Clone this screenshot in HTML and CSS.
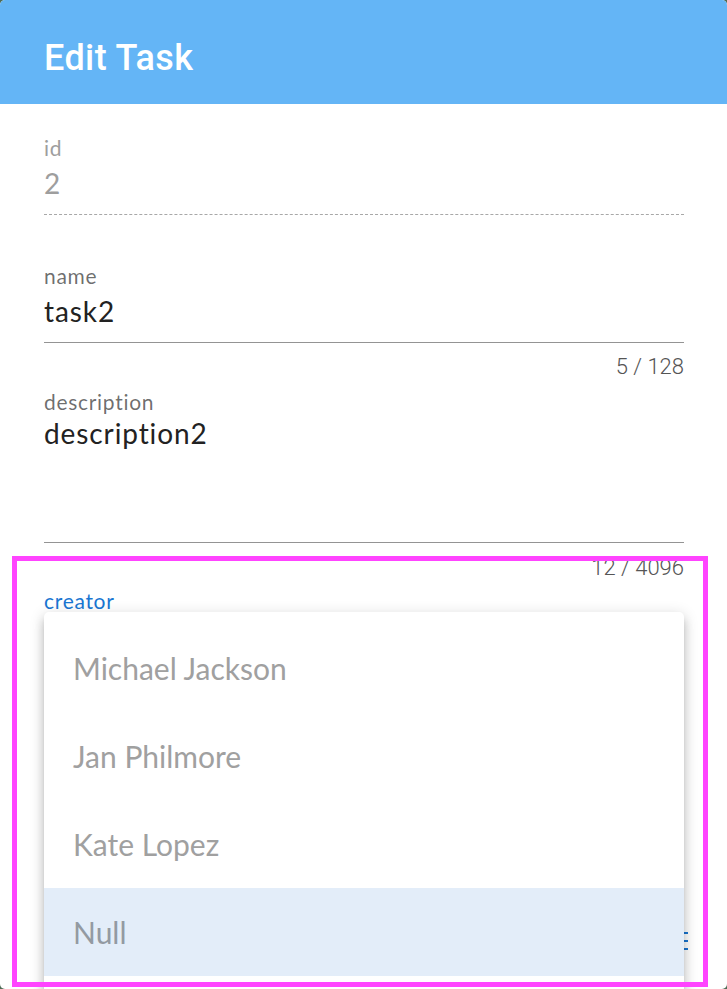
FILE: index.html
```html
<!DOCTYPE html>
<html lang="en">
<head>
<meta charset="utf-8">
<title>Edit Task</title>
<link rel="stylesheet" href="styles.css">
</head>
<body>
<div class="dialog">
  <header class="dialog-header">Edit Task</header>
  <div class="dialog-body">
    <div class="field field-disabled">
      <div class="field-label">id</div>
      <div class="field-input field-input-dashed"><span class="field-value">2</span></div>
    </div>

    <div class="field field-name">
      <div class="field-label">name</div>
      <div class="field-input"><span class="field-value">task2</span></div>
      <div class="field-counter">5 / 128</div>
    </div>

    <div class="field field-desc">
      <div class="field-label">description</div>
      <div class="field-input field-textarea"><span class="field-value">description2</span></div>
      <div class="field-counter">12 / 4096</div>
    </div>

    <div class="field field-select">
      <div class="field-label field-label-active">creator</div>
      <span class="append-icon"></span>
      <ul class="menu">
        <li class="menu-item">Michael Jackson</li>
        <li class="menu-item">Jan Philmore</li>
        <li class="menu-item">Kate Lopez</li>
        <li class="menu-item menu-item-active">Null</li>
        <li class="menu-item">&nbsp;</li>
      </ul>
    </div>
  </div>
  <div class="highlight"></div>
</div>
</body>
</html>
```

FILE: styles.css
```css
html, body {
  margin: 0;
  padding: 0;
  height: 989px;
  overflow: hidden;
  background: #4e6b55;
}

.dialog {
  position: relative;
  height: 989px;
  background: #ffffff;
  border-radius: 5px;
  overflow: hidden;
}

.dialog-header {
  height: 104px;
  box-sizing: border-box;
  padding: 12px 44px 0;
  display: flex;
  align-items: center;
  background: #64b5f6;
  color: #ffffff;
  font-family: Roboto, "Liberation Sans", sans-serif;
  font-weight: 500;
  font-size: 36px;
  letter-spacing: 0.4px;
}

.dialog-body {
  padding: 32px 43px 0 44px;
  font-family: Lato, "Open Sans", sans-serif;
}

.field {
  position: relative;
}

.field-label {
  font-size: 21px;
  line-height: 24px;
  color: rgba(0, 0, 0, 0.58);
  letter-spacing: 0.7px;
}

.field-label-active {
  color: #1976d2;
}

.field-input {
  margin-top: 7px;
  padding-bottom: 15px;
  border-bottom: 1px solid #949494;
}

.field-input-dashed {
  border-bottom: 1px dashed #a8a8a8;
}

.field-value {
  display: block;
  font-size: 28px;
  line-height: 32px;
  color: #222222;
  letter-spacing: 0.9px;
}

.field-disabled .field-label,
.field-disabled .field-value {
  color: #9e9e9e;
}

.field-name {
  margin-top: 49px;
}

.field-counter {
  margin-top: 12px;
  text-align: right;
  font-family: Roboto, "Liberation Sans", sans-serif;
  font-weight: 300;
  font-size: 22px;
  line-height: 24px;
  color: #555555;
}

.field-desc {
  margin-top: 11px;
}

.field-textarea {
  margin-top: 3px;
  height: 110px;
}

.field-desc .field-counter {
  margin-top: 13px;
}

.field-select {
  margin-top: 9px;
}

.append-icon {
  position: absolute;
  left: 640px;
  top: 343px;
  width: 4px;
  height: 2px;
  background: #1976d2;
  box-shadow: 0 8px 0 #1976d2, 0 16px 0 #1976d2;
}

.menu {
  position: absolute;
  top: 23px;
  left: 0;
  width: 640px;
  margin: 0;
  padding: 12px 0 0;
  list-style: none;
  background: #ffffff;
  border-radius: 5px;
  box-shadow: 0 5px 5px -3px rgba(0, 0, 0, 0.2), 0 8px 10px 1px rgba(0, 0, 0, 0.14), 0 3px 14px 2px rgba(0, 0, 0, 0.12);
}

.menu-item {
  height: 88px;
  display: flex;
  align-items: center;
  padding-left: 29px;
  font-size: 30px;
  line-height: 36px;
  color: #a0a0a0;
}

.menu-item-active {
  background: #e3edf9;
  color: #939aa2;
}

.highlight {
  position: absolute;
  left: 12px;
  top: 556px;
  width: 696px;
  height: 431px;
  box-sizing: border-box;
  border: 5px solid #ff44ff;
  pointer-events: none;
}
```
